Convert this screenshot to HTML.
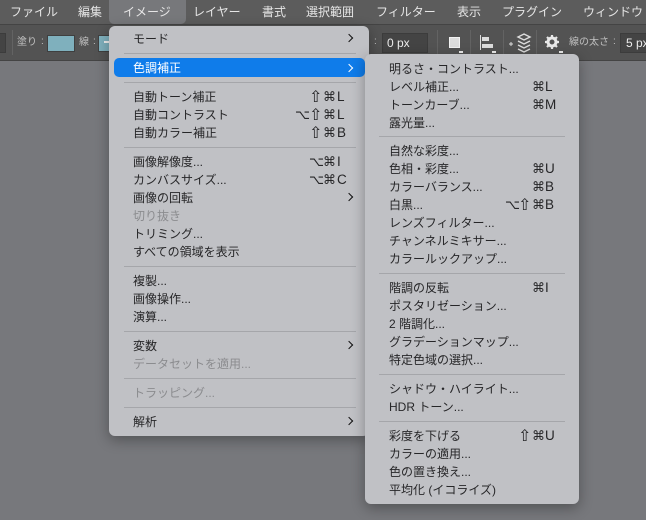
<!DOCTYPE html>
<html lang="ja"><head><meta charset="utf-8">
<style>
html,body{margin:0;padding:0}
body{width:646px;height:520px;overflow:hidden;position:relative;background:#77787c;font-family:"Liberation Sans","Noto Sans CJK JP",sans-serif;font-size:12px;color:#262628}
#bar{position:absolute;left:0;top:0;width:646px;height:24px;background:#5c5c5c;border-bottom:1px solid #444}
#tool{position:absolute;left:0;top:25px;width:646px;height:35px;background:#535353;border-bottom:1px solid #444}
.m{position:absolute;top:3px;height:18px;line-height:18px;font-size:12px;color:#e6e6e6;white-space:nowrap}
#act{position:absolute;left:109px;top:0;width:77px;height:24px;background:#77787b;border-radius:0 0 5px 5px}
.t{position:absolute;font-size:10px;line-height:16px;color:#c0c0c0;white-space:nowrap}
.sep{position:absolute;top:30px;width:1px;height:25px;background:#636363}
.inp{position:absolute;background:#444;border:1px solid #3c3c3c;box-sizing:border-box;color:#ececec;font-size:12px;line-height:18px;height:20px;padding-left:3px}
.menu{position:absolute;background:#c0c1c5;border-radius:6px;box-shadow:0 4px 14px rgba(0,0,0,.32)}
.i{position:absolute;height:18px;line-height:18px;margin-top:1px;white-space:nowrap}
.d{color:#8b8c8f}
.k{position:absolute;height:18px;line-height:18px;margin-top:1px;white-space:nowrap;font-size:13px;font-family:"DejaVu Sans","Liberation Sans",sans-serif}
.k b{position:absolute;top:1px;width:13px;text-align:center;font-weight:normal}
.k b.p{font-size:16px;top:0}
.k u{position:absolute;top:0;text-decoration:none;font-family:"Liberation Sans",sans-serif;font-size:13.5px}
.s{position:absolute;height:1px;background:#a5a6aa}
.a{position:absolute;width:5px;height:5px;border-top:1.6px solid #111;border-right:1.6px solid #111;transform:rotate(45deg)}
#hi{position:absolute;left:5px;top:32px;width:251px;height:19px;background:#0f7cea;border-radius:5px}
#m1 .i{left:24px}#m1 .s{left:15px;width:232px}#m1 .k{left:0}#m1 .a{left:237px}
#m2 .i{left:24px}#m2 .s{left:14px;width:186px}#m2 .k{left:0}
.x1{left:186px}.x2{left:200px}.x3{left:214px}.x4{left:228px}
.y1{left:140px}.y2{left:153px}.y3{left:167px}.y4{left:180px}
</style></head><body>
<div id="bar"></div>
<div id="act"></div>
<div class="m" style="left:10px">ファイル</div>
<div class="m" style="left:78px">編集</div>
<div class="m" style="left:123px">イメージ</div>
<div class="m" style="left:193px">レイヤー</div>
<div class="m" style="left:262px">書式</div>
<div class="m" style="left:306px">選択範囲</div>
<div class="m" style="left:376px">フィルター</div>
<div class="m" style="left:457px">表示</div>
<div class="m" style="left:502px">プラグイン</div>
<div class="m" style="left:583px">ウィンドウ</div>

<div id="tool"></div>
<div class="inp" style="left:-6px;top:33px;width:12px"></div>
<div class="sep" style="left:12px"></div>
<div class="t" style="left:17px;top:35px">塗り</div>
<div class="t" style="left:41px;top:34px">:</div>
<div style="position:absolute;left:47px;top:35px;width:26px;height:15px;background:#7fb0bd;border:1px solid #3f3f3f"></div>
<div class="t" style="left:79px;top:35px">線</div>
<div class="t" style="left:93px;top:34px">:</div>
<div style="position:absolute;left:98px;top:35px;width:14px;height:15px;background:#7fb0bd;border:1px solid #3f3f3f"></div>
<div style="position:absolute;left:104px;top:41px;width:5px;height:2px;background:#eee"></div>
<div class="t" style="left:374px;top:34px">:</div>
<div class="inp" style="left:382px;top:33px;width:46px;padding-left:4px">0 px</div>
<div class="sep" style="left:437px"></div>
<div style="position:absolute;left:449px;top:37px;width:9px;height:9px;background:#ddd;border:1px solid #f2f2f2"></div>
<div style="position:absolute;left:459px;top:51px;width:4px;height:2px;background:#eee"></div>
<div class="sep" style="left:470px"></div>
<svg style="position:absolute;left:478px;top:33px" width="24" height="22"><path d="M2.5 2v15" stroke="#ddd" fill="none"/><rect x="4" y="4" width="7" height="4" fill="#ddd"/><rect x="4" y="11" width="11" height="4" fill="#ddd"/><rect x="14" y="18" width="4" height="2" fill="#eee"/></svg>
<div class="sep" style="left:503px"></div>
<svg style="position:absolute;left:509px;top:31px" width="24" height="24"><path d="M0 13h4M2 11v4" stroke="#ddd" fill="none"/><path d="M15 3l6 3-6 3-6-3zM9 10l6 3 6-3M9 14l6 3 6-3M9 18l6 3 6-3" stroke="#ddd" stroke-width="1.4" fill="none"/></svg>
<div class="sep" style="left:536px"></div>
<svg style="position:absolute;left:544px;top:34px" width="22" height="20"><circle cx="8" cy="8" r="4" fill="none" stroke="#e8e8e8" stroke-width="3"/><path d="M8 1v3M8 12v3M1 8h3M12 8h3M3 3l2 2M11 11l2 2M13 3l-2 2M5 11l-2 2" stroke="#e8e8e8" stroke-width="2.2"/><rect x="15" y="17" width="4" height="2" fill="#eee"/></svg>
<div class="t" style="left:569px;top:35px">線の太さ</div>
<div class="t" style="left:613px;top:34px">:</div>
<div class="inp" style="left:620px;top:33px;width:40px;padding-left:5px">5 px</div>

<div class="menu" id="m1" style="left:109px;top:26px;width:260px;height:410px">
<div class="i" style="top:3px">モード</div><div class="a" style="top:9px"></div>
<div class="s" style="top:27px"></div>
<div id="hi"></div>
<div class="i" style="top:32px;color:#fff">色調補正</div><div class="a" style="top:39px;border-color:#fff"></div>
<div class="s" style="top:56px"></div>
<div class="i" style="top:61px">自動トーン補正</div><div class="k" style="top:61px"><b class="x2 p">⇧</b><b class="x3">⌘</b><u class="x4">L</u></div>
<div class="i" style="top:79px">自動コントラスト</div><div class="k" style="top:79px"><b class="x1">⌥</b><b class="x2 p">⇧</b><b class="x3">⌘</b><u class="x4">L</u></div>
<div class="i" style="top:97px">自動カラー補正</div><div class="k" style="top:97px"><b class="x2 p">⇧</b><b class="x3">⌘</b><u class="x4">B</u></div>
<div class="s" style="top:121px"></div>
<div class="i" style="top:126px">画像解像度...</div><div class="k" style="top:126px"><b class="x2">⌥</b><b class="x3">⌘</b><u class="x4">I</u></div>
<div class="i" style="top:144px">カンバスサイズ...</div><div class="k" style="top:144px"><b class="x2">⌥</b><b class="x3">⌘</b><u class="x4">C</u></div>
<div class="i" style="top:162px">画像の回転</div><div class="a" style="top:168px"></div>
<div class="i d" style="top:180px">切り抜き</div>
<div class="i" style="top:198px">トリミング...</div>
<div class="i" style="top:216px">すべての領域を表示</div>
<div class="s" style="top:240px"></div>
<div class="i" style="top:245px">複製...</div>
<div class="i" style="top:263px">画像操作...</div>
<div class="i" style="top:281px">演算...</div>
<div class="s" style="top:305px"></div>
<div class="i" style="top:310px">変数</div><div class="a" style="top:316px"></div>
<div class="i d" style="top:328px">データセットを適用...</div>
<div class="s" style="top:352px"></div>
<div class="i d" style="top:357px">トラッピング...</div>
<div class="s" style="top:381px"></div>
<div class="i" style="top:386px">解析</div><div class="a" style="top:392px"></div>
</div>

<div class="menu" id="m2" style="left:365px;top:54px;width:214px;height:450px">
<div class="i" style="top:5px">明るさ・コントラスト...</div>
<div class="i" style="top:23px">レベル補正...</div><div class="k" style="top:23px"><b class="y3">⌘</b><u class="y4">L</u></div>
<div class="i" style="top:41px">トーンカーブ...</div><div class="k" style="top:41px"><b class="y3">⌘</b><u class="y4">M</u></div>
<div class="i" style="top:59px">露光量...</div>
<div class="s" style="top:82px"></div>
<div class="i" style="top:87px">自然な彩度...</div>
<div class="i" style="top:105px">色相・彩度...</div><div class="k" style="top:105px"><b class="y3">⌘</b><u class="y4">U</u></div>
<div class="i" style="top:123px">カラーバランス...</div><div class="k" style="top:123px"><b class="y3">⌘</b><u class="y4">B</u></div>
<div class="i" style="top:141px">白黒...</div><div class="k" style="top:141px"><b class="y1">⌥</b><b class="y2 p">⇧</b><b class="y3">⌘</b><u class="y4">B</u></div>
<div class="i" style="top:159px">レンズフィルター...</div>
<div class="i" style="top:177px">チャンネルミキサー...</div>
<div class="i" style="top:195px">カラールックアップ...</div>
<div class="s" style="top:219px"></div>
<div class="i" style="top:224px">階調の反転</div><div class="k" style="top:224px"><b class="y3">⌘</b><u class="y4">I</u></div>
<div class="i" style="top:242px">ポスタリゼーション...</div>
<div class="i" style="top:260px">2 階調化...</div>
<div class="i" style="top:278px">グラデーションマップ...</div>
<div class="i" style="top:296px">特定色域の選択...</div>
<div class="s" style="top:320px"></div>
<div class="i" style="top:325px">シャドウ・ハイライト...</div>
<div class="i" style="top:343px">HDR トーン...</div>
<div class="s" style="top:367px"></div>
<div class="i" style="top:372px">彩度を下げる</div><div class="k" style="top:372px"><b class="y2 p">⇧</b><b class="y3">⌘</b><u class="y4">U</u></div>
<div class="i" style="top:390px">カラーの適用...</div>
<div class="i" style="top:408px">色の置き換え...</div>
<div class="i" style="top:426px">平均化 (イコライズ)</div>
</div>
</body></html>
